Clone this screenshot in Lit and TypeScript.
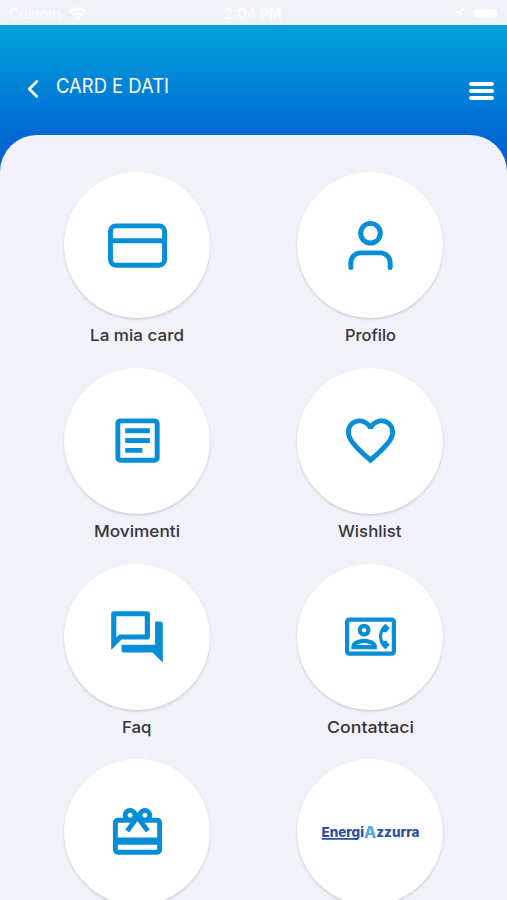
import { LitElement, html, svg, css } from "lit";
import { customElement, property } from "lit/decorators.js";

const icons: Record<string, unknown> = {
  card: svg`<g class="line"><rect x="1" y="4" width="22" height="16" rx="2.2"/><path d="M1 10.1h22"/></g>`,
  user: svg`<g class="line"><path d="M20 21v-2a4 4 0 0 0-4-4H8a4 4 0 0 0-4 4v2"/><circle cx="12" cy="7" r="4"/></g>`,
  article: svg`<path d="M19 5v14H5V5h14m0-2H5c-1.100 0-2 .9-2 2v14c0 1.100.9 2 2 2h14c1.100 0 2-.9 2-2V5c0-1.100-.9-2-2-2zM14 17H7v-2h7v2zm3-4H7v-2h10v2zm0-4H7V7h10v2z"/>`,
  heart: svg`<path d="M16.500 3c-1.740 0-3.410.810-4.500 2.090C10.910 3.810 9.240 3 7.500 3 4.420 3 2 5.420 2 8.500c0 3.780 3.400 6.860 8.550 11.540L12 21.350l1.450-1.320C18.600 15.360 22 12.280 22 8.500 22 5.420 19.580 3 16.500 3zm-4.400 15.550l-.1.100-.1-.1C7.140 14.240 4 11.390 4 8.500 4 6.500 5.500 5 7.500 5c1.540 0 3.040.990 3.570 2.360h1.870C13.460 5.990 14.960 5 16.500 5c2 0 3.500 1.500 3.500 3.500 0 2.890-3.140 5.740-7.900 10.050z"/>`,
  chat: svg`<path d="M15 4v7H5.170L4 12.170V4h11m1-2H3c-.55 0-1 .45-1 1v14l4-4h10c.55 0 1-.45 1-1V3c0-.55-.45-1-1-1zm5 4h-2v9H6v2c0 .55.45 1 1 1h11l4 4V7c0-.55-.45-1-1-1z"/>`,
  contact: svg`<path d="M22 3H2C.9 3 0 3.900 0 5v14c0 1.100.9 2 2 2h20c1.100 0 1.990-.9 1.990-2L24 5c0-1.100-.9-2-2-2zm0 16H2V5h20v14zm-2.990-1.010L21 16l-1.510-2h-1.640c-.22-.63-.35-1.300-.35-2s.13-1.370.35-2h1.640L21 8l-1.990-1.990c-1.310.980-2.280 2.370-2.730 3.990-.18.640-.28 1.310-.28 2s.1 1.360.28 2c.45 1.610 1.420 3.010 2.730 3.990zM9 12c1.650 0 3-1.350 3-3s-1.350-3-3-3-3 1.350-3 3 1.350 3 3 3zm0-4c.55 0 1 .45 1 1s-.45 1-1 1-1-.45-1-1 .45-1 1-1zm6 8.590c0-2.500-3.970-3.580-6-3.580s-6 1.080-6 3.580V18h12v-1.410zM5.480 16c.740-.5 2.220-1 3.520-1s2.770.490 3.520 1H5.480z"/>`,
  gift: svg`<path d="M20 6h-2.180c.11-.31.18-.65.18-1 0-1.660-1.340-3-3-3-1.050 0-1.960.540-2.500 1.350l-.5.670-.5-.68C10.960 2.540 10.050 2 9 2 7.340 2 6 3.340 6 5c0 .35.07.690.18 1H4c-1.110 0-1.990.890-1.990 2L2 19c0 1.110.890 2 2 2h16c1.110 0 2-.89 2-2V8c0-1.110-.89-2-2-2zm-5-2c.55 0 1 .45 1 1s-.45 1-1 1-1-.45-1-1 .45-1 1-1zM9 4c.55 0 1 .45 1 1s-.45 1-1 1-1-.45-1-1 .45-1 1-1zm11 15H4v-2h16v2zm0-5H4V8h5.080L7 10.830 8.620 12 11 8.760l1-1.360 1 1.360L15.380 12 17 10.830 14.920 8H20v6z"/>`,
};

interface Tile {
  icon: string;
  label: string;
  size: number;
  width: number;
}

const tiles: Tile[] = [
  { icon: "card", label: "La mia card", size: 59, width: 94 },
  { icon: "user", label: "Profilo", size: 59, width: 51 },
  { icon: "article", label: "Movimenti", size: 59, width: 86 },
  { icon: "heart", label: "Wishlist", size: 59, width: 63.5 },
  { icon: "chat", label: "Faq", size: 62, width: 29.5 },
  { icon: "contact", label: "Contattaci", size: 51, width: 87 },
  { icon: "gift", label: "", size: 59, width: 0 },
  { icon: "logo", label: "", size: 98, width: 0 },
];

@customElement("menu-tile")
class MenuTile extends LitElement {
  @property({ attribute: false }) tile!: Tile;

  static styles = css`
    :host {
      display: flex;
      flex-direction: column;
      align-items: center;
    }
    .disc {
      width: 146px;
      height: 146px;
      border-radius: 50%;
      background: #fff;
      box-shadow: 0 1.5px 2.5px rgba(40, 40, 60, 0.18);
      display: flex;
      align-items: center;
      justify-content: center;
    }
    svg {
      display: block;
      overflow: visible;
    }
    .icon {
      fill: #078ed6;
    }
    .line {
      fill: none;
      stroke: #078ed6;
      stroke-width: 2;
      stroke-linecap: round;
      stroke-linejoin: round;
    }
    .label {
      margin-top: 3px;
      font: 500 16.5px "Inter", sans-serif;
      fill: #34353d;
    }
    .brand {
      font: 800 13.5px "Inter", sans-serif;
      fill: #2a519f;
    }
    .rule {
      fill: #2a519f;
    }
    .accent {
      font: 800 16px "Inter", sans-serif;
      fill: #55a9de;
    }
  `;

  render() {
    const { icon, label, size, width } = this.tile;
    return html`
      <div class="disc">
        ${icon === "logo"
          ? html`<svg width="98" height="20" viewBox="0 0 98 20">
              <text class="brand" textLength="98" lengthAdjust="spacingAndGlyphs" x="0.500" y="14.500">Energi<tspan class="accent" dy="1.500">A</tspan><tspan dy="-1.500">zzurra</tspan></text>
              <path class="rule" d="M.8 16h36.500l-1.500 1.700H.8z" />
            </svg>`
          : html`<svg class="icon" width=${size} height=${size} viewBox="0 0 24 24">${icons[icon]}</svg>`}
      </div>
      ${label
        ? html`<svg class="label" width=${width} height="26">
            <text x="0" y="19.500" textLength=${width} lengthAdjust="spacingAndGlyphs">${label}</text>
          </svg>`
        : ""}
    `;
  }
}

@customElement("app-root")
class AppRoot extends LitElement {
  static styles = css`
    :host {
      display: flex;
      flex-direction: column;
      height: 900px;
      overflow: hidden;
      background: #f0f1f9;
      font-family: "Inter", sans-serif;
    }
    svg {
      display: block;
      overflow: visible;
    }
    .status {
      flex: none;
      height: 25px;
      box-sizing: border-box;
      padding: 2px 10px 0 9px;
      display: grid;
      grid-template-columns: 1fr auto 1fr;
      align-items: center;
      color: #fcfcff;
      fill: #fff;
      font-size: 14px;
      font-weight: 500;
    }
    .side {
      display: flex;
      align-items: center;
      gap: 8px;
    }
    .end {
      justify-content: flex-end;
      gap: 10px;
    }
    .time {
      font-weight: 700;
    }
    .battery {
      width: 23px;
      height: 9px;
      border-radius: 3px;
      background: #fff;
    }
    .stage {
      flex: 1;
      min-height: 0;
      display: flex;
      flex-direction: column;
      background: linear-gradient(#00a2d8, #0095da 26px, #0069d2 110px, #0061cd 148px);
    }
    header {
      flex: none;
      height: 110px;
      box-sizing: border-box;
      padding: 20px 13px 0 27px;
      display: flex;
      align-items: center;
    }
    .back {
      margin-top: -2px;
    }
    .stroke {
      fill: none;
      stroke: #fff;
      stroke-width: 2.6;
      stroke-linecap: round;
      stroke-linejoin: round;
    }
    .title {
      margin: -8px auto 0 17px;
      font: 400 19.5px "Inter", sans-serif;
      fill: #fff;
    }
    .bars {
      display: flex;
      flex-direction: column;
      gap: 3px;
      margin-top: 2px;
    }
    .bars i {
      width: 25px;
      height: 4px;
      border-radius: 2px;
      background: #fff;
    }
    .panel {
      flex: 1;
      min-height: 0;
      border-radius: 37px 37px 0 0;
      background: #f0f1f9;
      padding: 37px 20.5px 0;
      display: grid;
      grid-template-columns: 1fr 1fr;
      grid-auto-rows: 195.8px;
      align-content: start;
    }
  `;

  render() {
    return html`
      <div class="status">
        <div class="side">
          <span>Custom</span>
          <svg width="18" height="13" viewBox="0 0 18 13">
            <path d="M0 4C5-.9 13-.9 18 4l-2 2.200C12 2.300 6 2.300 2 6.200zM3.200 7.400c3.300-3.200 8.300-3.200 11.600 0l-2 2.100c-2.200-2-5.400-2-7.600 0zM6.300 10.600c1.600-1.400 3.800-1.400 5.400 0L9 13z" />
          </svg>
        </div>
        <span class="time">2:04 PM</span>
        <div class="side end">
          <svg width="11" height="11" viewBox="0 0 11 11"><path d="M11 0 6.500 11V5H0z" /></svg>
          <span class="battery"></span>
        </div>
      </div>
      <div class="stage">
        <header>
          <svg class="back" width="12" height="18" viewBox="0 0 12 18"><path class="stroke" d="M9.800 1.500 2.200 9l7.600 7.500" /></svg>
          <svg class="title" width="113" height="24">
            <text x="0" y="19" textLength="113" lengthAdjust="spacingAndGlyphs">CARD E DATI</text>
          </svg>
          <div class="bars"><i></i><i></i><i></i></div>
        </header>
        <main class="panel">${tiles.map((tile) => html`<menu-tile .tile=${tile}></menu-tile>`)}</main>
      </div>
    `;
  }
}
